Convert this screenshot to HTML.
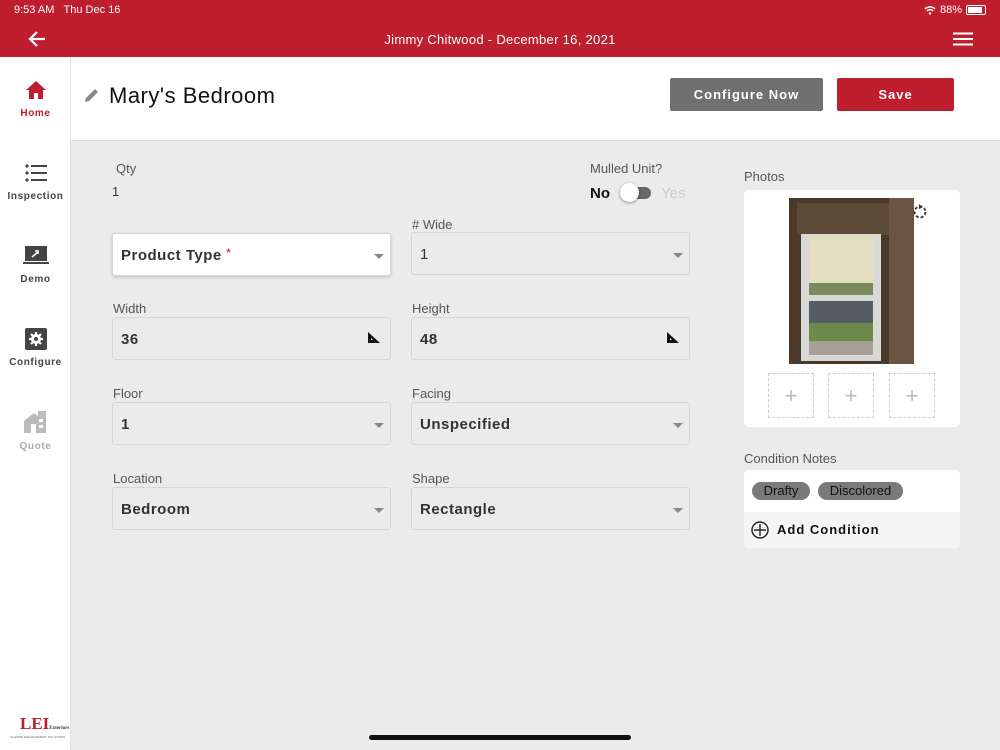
<!DOCTYPE html>
<html><head><style>
*{box-sizing:border-box;margin:0;padding:0}
body{width:1000px;height:750px;overflow:hidden;background:#ebebeb;font-family:"Liberation Sans",sans-serif;position:relative;color:#222}
.abs{position:absolute}
#top{left:0;top:0;width:1000px;height:57px;background:#be1e2d;color:#fff}
#side{left:0;top:57px;width:71px;height:693px;background:#fff;border-right:1px solid #e2e2e2}
#head{left:71px;top:57px;width:929px;height:84px;background:#fff;border-bottom:1px solid #ddd}
.nav{position:absolute;left:0;width:71px;text-align:center;font-size:10px;font-weight:bold;letter-spacing:.6px;color:#444}
.lbl{position:absolute;font-size:13px;color:#555}
.fld{position:absolute;height:43px;border:1px solid #d6d6d6;border-radius:3px;background:#ebebeb;font-size:15px;font-weight:bold;color:#333;padding:13px 8px 0;letter-spacing:.5px}
.dd::after{content:"";position:absolute;right:6px;top:20px;border:5px solid transparent;border-top:5px solid #888;border-bottom:0}
.btn{position:absolute;top:78px;height:33px;color:#fff;font-size:13px;font-weight:bold;letter-spacing:1px;text-align:center;line-height:33px;border-radius:2px}
.card{position:absolute;background:#fff;border-radius:5px}
.plus{position:absolute;top:373px;width:46px;height:45px;border:1px dashed #ccc;color:#bbb;font-size:22px;text-align:center;line-height:43px}
.chip{position:absolute;top:482px;height:18px;background:#7a7a7a;border-radius:9px;font-size:13px;color:#111;line-height:18px;text-align:center}
</style></head><body>
<div id="top" class="abs">
<div class="abs" style="left:14px;top:4px;font-size:11px">9:53 AM&nbsp;&nbsp;&nbsp;Thu Dec 16</div>
<div class="abs" style="left:940px;top:4px;font-size:11px">88%</div>
<div class="abs" style="left:966px;top:5px;width:20px;height:10px;border:1px solid #fff;border-radius:2px;padding:1px"><div style="width:85%;height:100%;background:#fff"></div></div>
<svg class="abs" style="left:924px;top:5px" width="12" height="10" viewBox="0 0 12 10"><path d="M1 4a7 7 0 0 1 10 0M3 6a4 4 0 0 1 6 0" stroke="#fff" stroke-width="1.5" fill="none"/><circle cx="6" cy="8.5" r="1.2" fill="#fff"/></svg>
<svg class="abs" style="left:27px;top:30px" width="20" height="18" viewBox="0 0 20 18"><path d="M18 9H3M10 2L3 9l7 7" stroke="#fff" stroke-width="2.2" fill="none"/></svg>
<div class="abs" style="left:0;width:1000px;top:32px;text-align:center;font-size:13px;letter-spacing:.3px">Jimmy Chitwood - December 16, 2021</div>
<svg class="abs" style="left:953px;top:32px" width="20" height="14"><path d="M0 1.5h20M0 7h20M0 12.5h20" stroke="#fff" stroke-width="2"/></svg>
</div>
<div id="side" class="abs">
<svg class="abs" style="left:25px;top:23px" width="22" height="20" viewBox="0 0 22 20"><path d="M11 1L1 10h3v9h5v-6h4v6h5v-9h3z" fill="#be1e2d"/></svg>
<div class="nav" style="top:51px;color:#be1e2d">Home</div>
<svg class="abs" style="left:25px;top:107px" width="22" height="18"><g fill="#444"><circle cx="2" cy="2" r="1.6"/><circle cx="2" cy="9" r="1.6"/><circle cx="2" cy="16" r="1.6"/><rect x="6" y="1" width="16" height="2"/><rect x="6" y="8" width="16" height="2"/><rect x="6" y="15" width="16" height="2"/></g></svg>
<div class="nav" style="top:134px">Inspection</div>
<svg class="abs" style="left:23px;top:189px" width="26" height="20"><rect x="2" y="0" width="22" height="15" fill="#444"/><rect x="0" y="16" width="26" height="2" fill="#444"/><path d="M9 11l6-5M12 5h3v3" stroke="#fff" stroke-width="1.6" fill="none"/></svg>
<div class="nav" style="top:217px">Demo</div>
<svg class="abs" style="left:25px;top:271px" width="22" height="22"><rect width="22" height="22" rx="2" fill="#444"/><circle cx="11" cy="11" r="5" fill="#fff"/><path d="M11 4v14M4 11h14M6 6l10 10M16 6L6 16" stroke="#fff" stroke-width="2.2"/><circle cx="11" cy="11" r="2" fill="#444"/></svg>
<div class="nav" style="top:300px">Configure</div>
<svg class="abs" style="left:24px;top:354px" width="24" height="22"><path d="M0 10L10 2l4 3V0h8v22H0z" fill="#bbb"/><rect x="7" y="13" width="5" height="9" fill="#fff"/><rect x="15" y="8" width="4" height="3" fill="#fff"/><rect x="15" y="14" width="4" height="3" fill="#fff"/></svg>
<div class="nav" style="top:384px;color:#aaa">Quote</div>
<div class="abs" style="left:20px;top:657px;font-family:'Liberation Serif',serif;color:#be1e2d;font-size:17px;font-weight:bold">LEI<span style="font-size:5px;color:#333">Exteriors</span></div>
<div class="abs" style="left:10px;top:678px;font-size:3px;color:#666">IN-HOME ENHANCEMENT SOLUTIONS</div>
</div>
<div id="head" class="abs">
<svg class="abs" style="left:13px;top:30px" width="16" height="16"><path d="M1 15l1-4 9-9 3 3-9 9z" fill="#888"/></svg>
<div class="abs" style="left:38px;top:26px;font-size:22px;color:#111;letter-spacing:.5px">Mary's Bedroom</div>
</div>
<div class="btn" style="left:670px;width:153px;background:#707070">Configure Now</div>
<div class="btn" style="left:837px;width:117px;background:#be1e2d">Save</div>

<div class="lbl" style="left:116px;top:161px">Qty</div>
<div class="abs" style="left:112px;top:184px;font-size:13px;color:#333">1</div>
<div class="lbl" style="left:590px;top:161px">Mulled Unit?</div>
<div class="abs" style="left:590px;top:185px;font-size:15px;font-weight:bold;color:#111">No</div>
<div class="abs" style="left:624px;top:187px;width:27px;height:12px;border-radius:6px;background:#666"></div>
<div class="abs" style="left:620px;top:183px;width:19px;height:19px;border-radius:50%;background:#fff;box-shadow:0 1px 3px rgba(0,0,0,.4)"></div>
<div class="abs" style="left:661px;top:185px;font-size:15px;color:#ccc">Yes</div>

<div class="fld dd" style="left:112px;top:233px;width:279px;background:#fff;box-shadow:0 1px 3px rgba(0,0,0,.2)">Product Type <span style="color:#e33;font-size:11px;vertical-align:top">*</span></div>
<div class="lbl" style="left:412px;top:217px">#&nbsp;Wide</div>
<div class="fld dd" style="left:411px;top:232px;width:279px;font-weight:normal">1</div>

<div class="lbl" style="left:113px;top:301px">Width</div>
<div class="fld" style="left:112px;top:317px;width:279px">36<svg class="abs" style="right:10px;top:14px" width="13" height="12"><path d="M1 0v11h12z" fill="#111"/><path d="M4 6v2h2z" fill="#fff"/></svg></div>
<div class="lbl" style="left:412px;top:301px">Height</div>
<div class="fld" style="left:411px;top:317px;width:279px">48<svg class="abs" style="right:10px;top:14px" width="13" height="12"><path d="M1 0v11h12z" fill="#111"/><path d="M4 6v2h2z" fill="#fff"/></svg></div>

<div class="lbl" style="left:113px;top:386px">Floor</div>
<div class="fld dd" style="left:112px;top:402px;width:279px">1</div>
<div class="lbl" style="left:412px;top:386px">Facing</div>
<div class="fld dd" style="left:411px;top:402px;width:279px">Unspecified</div>

<div class="lbl" style="left:113px;top:471px">Location</div>
<div class="fld dd" style="left:112px;top:487px;width:279px">Bedroom</div>
<div class="lbl" style="left:412px;top:471px">Shape</div>
<div class="fld dd" style="left:411px;top:487px;width:279px">Rectangle</div>

<div class="lbl" style="left:744px;top:169px">Photos</div>
<div class="card" style="left:744px;top:190px;width:216px;height:237px"></div>
<svg class="abs" style="left:789px;top:198px" width="125" height="166" viewBox="0 0 125 166">
<rect width="125" height="166" fill="#4a3a2c"/><rect x="100" y="0" width="25" height="166" fill="#6a5444"/>
<rect x="8" y="5" width="92" height="32" fill="#5e4a38"/>
<rect x="12" y="36" width="80" height="127" fill="#d8d8d4"/>
<rect x="20" y="38" width="64" height="58" fill="#e5dfc2"/><rect x="20" y="85" width="64" height="12" fill="#7a8a5a"/>
<rect x="20" y="103" width="64" height="22" fill="#555c66"/><rect x="20" y="125" width="64" height="18" fill="#6d8a4a"/>
<rect x="20" y="143" width="64" height="14" fill="#a8a096"/>
</svg>
<svg class="abs" style="left:912px;top:203px" width="16" height="16"><circle cx="8" cy="9" r="5.5" stroke="#333" stroke-width="1.8" fill="none" stroke-dasharray="3 2"/><path d="M7 1l4 3-4 2z" fill="#333"/></svg>
<div class="plus" style="left:768px">+</div>
<div class="plus" style="left:828px">+</div>
<div class="plus" style="left:889px">+</div>

<div class="lbl" style="left:744px;top:451px">Condition Notes</div>
<div class="card" style="left:744px;top:470px;width:216px;height:78px;overflow:hidden"><div class="abs" style="left:0;top:42px;width:216px;height:36px;background:#f5f5f5"></div></div>
<div class="chip" style="left:752px;width:58px">Drafty</div>
<div class="chip" style="left:818px;width:85px">Discolored</div>
<svg class="abs" style="left:751px;top:521px" width="18" height="18"><circle cx="9" cy="9" r="8" stroke="#222" stroke-width="1.4" fill="none"/><path d="M9 3v12M3 9h12" stroke="#222" stroke-width="1.4"/></svg>
<div class="abs" style="left:777px;top:522px;font-size:13px;font-weight:bold;letter-spacing:1px;color:#111">Add Condition</div>

<div class="abs" style="left:369px;top:735px;width:262px;height:5px;border-radius:3px;background:#111"></div>
</body></html>
